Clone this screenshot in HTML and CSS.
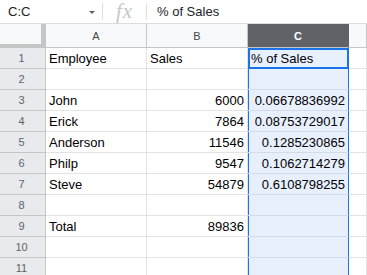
FILE: index.html
```html
<!DOCTYPE html>
<html>
<head>
<meta charset="utf-8">
<link rel="stylesheet" href="styles.css">
</head>
<body>
<div class="formula-bar">
  <div class="namebox"><span class="name">C:C</span><span class="caret"></span></div>
  <div class="sep"></div>
  <div class="fx">fx</div>
  <div class="sep"></div>
  <div class="formula">% of Sales</div>
</div>
<div class="sheet">
  <div class="corner"></div>
  <div class="colhead">A</div>
  <div class="colhead">B</div>
  <div class="colhead sel">C</div>
  <div class="colhead"></div>

  <div class="rowhead">1</div><div class="cell">Employee</div><div class="cell">Sales</div><div class="cell c active">% of Sales</div><div class="cell"></div>
  <div class="rowhead">2</div><div class="cell"></div><div class="cell"></div><div class="cell c"></div><div class="cell"></div>
  <div class="rowhead">3</div><div class="cell">John</div><div class="cell num">6000</div><div class="cell c num">0.06678836992</div><div class="cell"></div>
  <div class="rowhead">4</div><div class="cell">Erick</div><div class="cell num">7864</div><div class="cell c num">0.08753729017</div><div class="cell"></div>
  <div class="rowhead">5</div><div class="cell">Anderson</div><div class="cell num">11546</div><div class="cell c num">0.1285230865</div><div class="cell"></div>
  <div class="rowhead">6</div><div class="cell">Philp</div><div class="cell num">9547</div><div class="cell c num">0.1062714279</div><div class="cell"></div>
  <div class="rowhead">7</div><div class="cell">Steve</div><div class="cell num">54879</div><div class="cell c num">0.6108798255</div><div class="cell"></div>
  <div class="rowhead">8</div><div class="cell"></div><div class="cell"></div><div class="cell c"></div><div class="cell"></div>
  <div class="rowhead">9</div><div class="cell">Total</div><div class="cell num">89836</div><div class="cell c"></div><div class="cell"></div>
  <div class="rowhead">10</div><div class="cell"></div><div class="cell"></div><div class="cell c"></div><div class="cell"></div>
  <div class="rowhead">11</div><div class="cell"></div><div class="cell"></div><div class="cell c"></div><div class="cell"></div>
</div>
</body>
</html>
```
FILE: styles.css
```css
* { box-sizing: border-box; }
html, body { margin: 0; padding: 0; background: #fff; overflow: hidden; }
body { font-family: "Liberation Sans", Arial, sans-serif; color: #000; width: 367px; height: 275px; }

.formula-bar {
  display: flex;
  align-items: center;
  height: 24px;
  border-bottom: 1px solid #dadce0;
  font-size: 13px;
}
.namebox {
  width: 102px;
  display: flex;
  align-items: center;
  padding-left: 8px;
  padding-right: 7px;
  justify-content: space-between;
}
.name { color: #202124; font-size: 13px; }
.caret {
  width: 0; height: 0;
  border-left: 3px solid transparent;
  border-right: 3px solid transparent;
  border-top: 3px solid #5f6368;
  margin-top: 2px;
}
.sep { width: 1px; height: 17px; background: #e0e0e0; }
.fx {
  width: 43px;
  text-align: center;
  font-family: "Liberation Serif", "Times New Roman", serif;
  font-style: italic;
  font-size: 21px;
  color: #c4c7c5;
  line-height: 23px;
  letter-spacing: 1px;
}
.formula { padding-left: 10px; color: #202124; }

.sheet {
  display: grid;
  grid-template-columns: 46px 101px 101px 101px 1fr;
  grid-template-rows: 24px repeat(11, 21px);
  font-size: 13px;
}
.corner {
  background: #f8f9fa;
  border-right: 5px solid #c4c7c5;
  border-bottom: 4px solid #c4c7c5;
}
.colhead {
  background: #f8f9fa;
  border-right: 1px solid #c4c7c5;
  border-bottom: 1px solid #c4c7c5;
  display: flex; align-items: center; justify-content: center;
  font-size: 11px; color: #444746;
  padding-top: 1px;
}
.colhead.sel { background: #5f6368; color: #fff; font-weight: bold; border-right-color: #5f6368; }
.rowhead {
  background: #e8eaed;
  border-right: 1px solid #c4c7c5;
  border-bottom: 1px solid #c4c7c5;
  display: flex; align-items: center; justify-content: center;
  font-size: 11px; color: #5f6368;
  padding-right: 2px;
}
.cell {
  border-right: 1px solid #e2e3e3;
  border-bottom: 1px solid #e2e3e3;
  padding: 0 3px;
  display: flex; align-items: center;
  white-space: nowrap;
  overflow: hidden;
}
.cell.num { justify-content: flex-end; }
.cell.c {
  background: #e8f0fe;
  border-right: 1px solid #1a73e8;
  border-bottom-color: #d3dbe6;
  box-shadow: inset 1px 0 0 #1a73e8;
  padding-right: 3px;
}
.cell.active {
  border: 2px solid #1a73e8;
  box-shadow: none;
  padding-left: 1px;
}
```
